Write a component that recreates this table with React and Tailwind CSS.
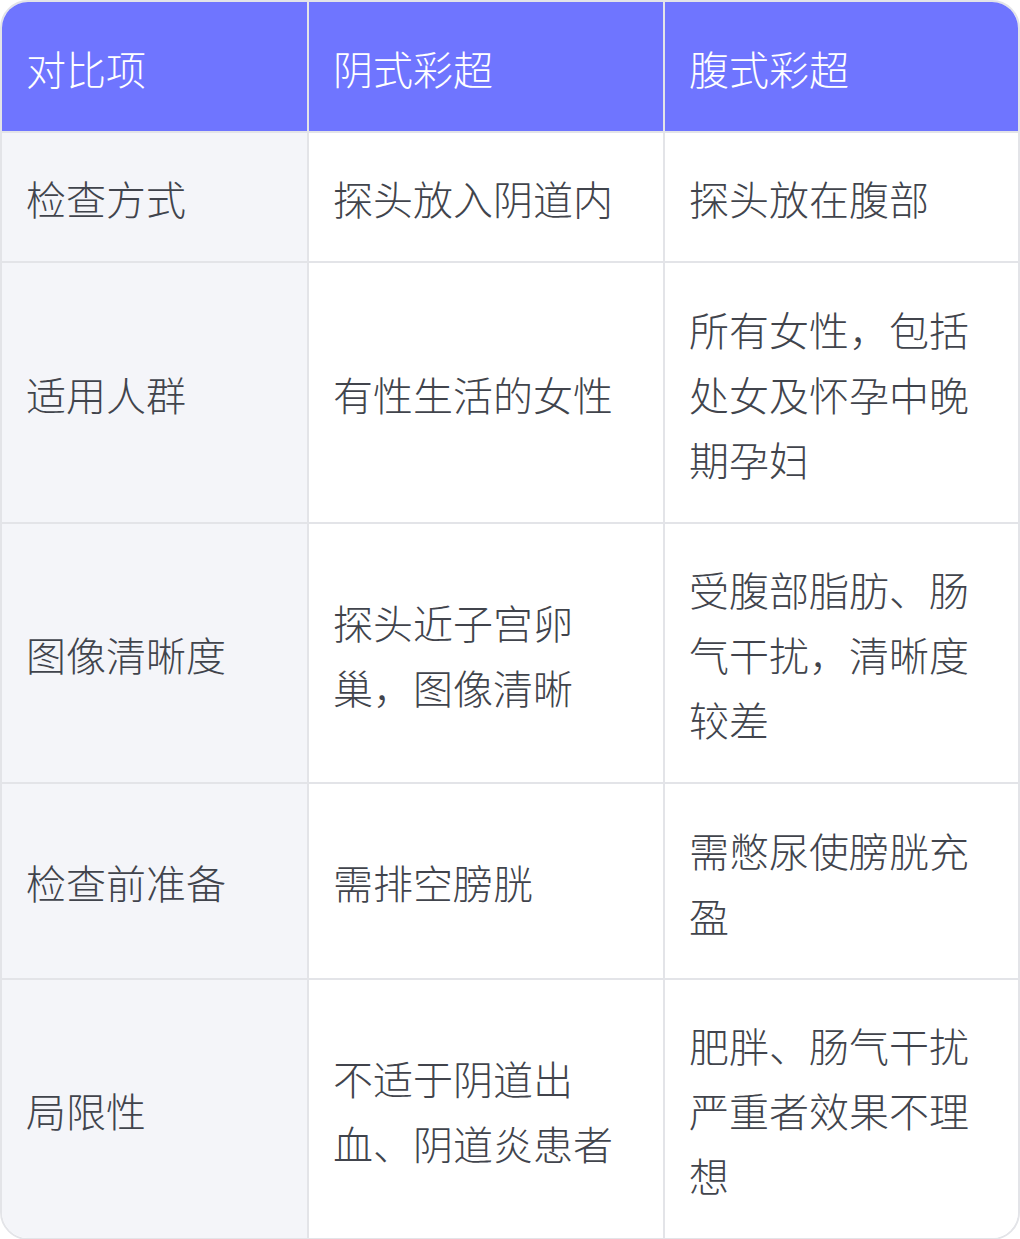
import React from "react";

const rows = [
  ["检查方式", "探头放入阴道内", "探头放在腹部"],
  ["适用人群", "有性生活的女性", "所有女性，包括处女及怀孕中晚期孕妇"],
  ["图像清晰度", "探头近子宫卵巢，图像清晰", "受腹部脂肪、肠气干扰，清晰度较差"],
  ["检查前准备", "需排空膀胱", "需憋尿使膀胱充盈"],
  ["局限性", "不适于阴道出血、阴道炎患者", "肥胖、肠气干扰严重者效果不理想"],
];

export default function App() {
  return (
    <div className="w-[1020px] h-[1239px] bg-white" style={{ fontFamily: '"Noto Sans CJK SC", "Noto Sans", sans-serif' }}>
      <div className="w-[1020px] border-2 border-[#e3e4e8] rounded-[28px] overflow-hidden">
        <table className="w-full table-fixed border-separate border-spacing-0 text-[40px] leading-[65px] font-light">
          <colgroup>
            <col className="w-[307px]" />
            <col className="w-[356px]" />
            <col className="w-[353px]" />
          </colgroup>
          <thead>
            <tr className="bg-[#6f75ff] text-white">
              {["对比项", "阴式彩超", "腹式彩超"].map((h, i) => (
                <th
                  key={h}
                  className={`text-left font-light px-6 pt-[33.5px] pb-[30px] align-middle border-b-2 border-[#e3e4e8] ${i < 2 ? "border-r-2" : ""}`}
                >
                  {h}
                </th>
              ))}
            </tr>
          </thead>
          <tbody>
            {rows.map((r, ri) => (
              <tr key={ri}>
                {r.map((c, ci) => (
                  <td
                    key={ci}
                    className={`px-6 pt-[33.5px] pb-[30px] align-middle text-[#41444c] border-[#e3e4e8] ${ci < 2 ? "border-r-2" : ""} ${ri < rows.length - 1 ? "border-b-2" : ""} ${ci === 0 ? "bg-[#f4f5f9]" : "bg-white"}`}
                  >
                    {c}
                  </td>
                ))}
              </tr>
            ))}
          </tbody>
        </table>
      </div>
    </div>
  );
}
